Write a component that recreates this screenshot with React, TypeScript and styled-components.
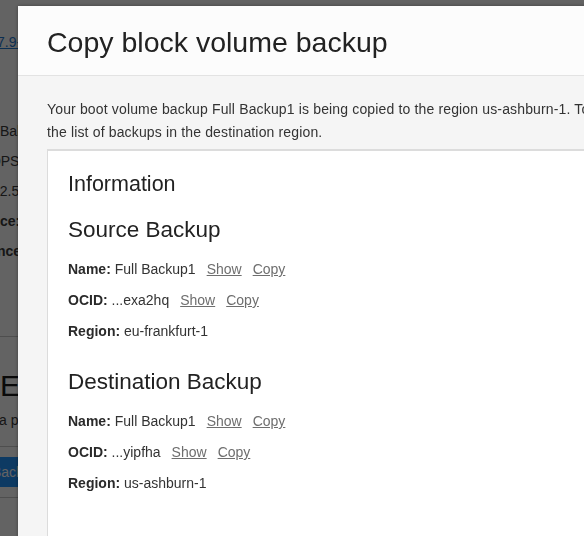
import styled, { createGlobalStyle } from "styled-components";

const GlobalStyle = createGlobalStyle`
  html, body {
    margin: 0;
    padding: 0;
    height: 100%;
    overflow: hidden;
    background: #ffffff;
    font-family: "Liberation Sans", Helvetica, Arial, sans-serif;
  }
`;

// page behind the dialog, only a thin strip of it shows
const BgPage = styled.div`
  display: flex;
  flex-direction: column;
  padding-top: 27px;
  width: 320px;
  color: #3a3a3a;
  font-size: 14px;
`;

const BgLine = styled.div<{ $indent?: number; $top?: number; $bold?: boolean }>`
  line-height: 30px;
  white-space: nowrap;
  margin-left: ${(p) => p.$indent ?? 0}px;
  margin-top: ${(p) => p.$top ?? 0}px;
  font-weight: ${(p) => (p.$bold ? 700 : 400)};
`;

const BgLink = styled.a`
  color: #1f78d1;
  text-decoration: underline;
`;

const BgRule = styled.hr<{ $top: number }>`
  border: 0;
  border-top: 1px solid #c8c8c8;
  margin: ${(p) => p.$top}px 0 0;
`;

const BgHeading = styled.div`
  font-size: 30px;
  line-height: 36px;
  margin-top: 31px;
  color: #1a1a1a;
`;

const BgButton = styled.div`
  margin-top: 10px;
  height: 30px;
  line-height: 30px;
  width: 120px;
  margin-left: -22px;
  padding-left: 14px;
  background: #2396ff;
  color: #ffffff;
  font-size: 14px;
`;

const Overlay = styled.div`
  position: fixed;
  inset: 0;
  background: rgba(0, 0, 0, 0.61);
`;

const Modal = styled.div`
  position: fixed;
  top: 6px;
  left: 18px;
  width: 680px;
  height: 560px;
  display: flex;
  flex-direction: column;
  background: #f5f5f5;
  box-shadow: 0 0 4px rgba(0, 0, 0, 0.35);
`;

const ModalHeader = styled.div`
  padding: 19px 29px 16px;
  background: #fcfcfc;
  border-bottom: 1px solid #e3e3e3;
`;

const ModalTitle = styled.h1`
  margin: 0;
  font-size: 28.5px;
  line-height: 34px;
  font-weight: 400;
  color: #222222;
`;

const ModalBody = styled.div`
  flex: 1;
  padding: 22px 29px 0;
`;

const Description = styled.p`
  margin: 0 0 5px;
  font-size: 14px;
  line-height: 23px;
  letter-spacing: 0.15px;
  color: #333333;
  white-space: nowrap;
`;

const Card = styled.div`
  background: #ffffff;
  border-top: 2px solid #dcdcdc;
  border-left: 1px solid #dcdcdc;
  padding: 20px 20px 40px;
  height: 100%;
`;

const CardTitle = styled.h2`
  margin: 0 0 19px;
  font-size: 21.5px;
  line-height: 26px;
  font-weight: 400;
  color: #222222;
`;

const Section = styled.section`
  display: flex;
  flex-direction: column;
  gap: 11px;
  & + & {
    margin-top: 27px;
  }
`;

const SectionTitle = styled.h3`
  margin: 0 0 5px;
  font-size: 22.5px;
  line-height: 27px;
  font-weight: 400;
  color: #222222;
`;

const Row = styled.div`
  font-size: 14px;
  line-height: 20px;
  color: #333333;
  white-space: nowrap;
`;

const Label = styled.b`
  font-weight: 700;
  color: #2a2a2a;
`;

const Action = styled.a`
  margin-left: 11px;
  color: #6e6e6e;
  text-decoration: underline;
  cursor: pointer;
`;

type Backup = { title: string; name: string; ocid: string; region: string };

const backups: Backup[] = [
  { title: "Source Backup", name: "Full Backup1", ocid: "...exa2hq", region: "eu-frankfurt-1" },
  { title: "Destination Backup", name: "Full Backup1", ocid: "...yipfha", region: "us-ashburn-1" },
];

function BackupSection({ b }: { b: Backup }) {
  return (
    <Section>
      <SectionTitle>{b.title}</SectionTitle>
      <Row>
        <Label>Name:</Label> {b.name}
        <Action>Show</Action>
        <Action>Copy</Action>
      </Row>
      <Row>
        <Label>OCID:</Label> {b.ocid}
        <Action>Show</Action>
        <Action>Copy</Action>
      </Row>
      <Row>
        <Label>Region:</Label> {b.region}
      </Row>
    </Section>
  );
}

export default function App() {
  return (
    <>
      <GlobalStyle />
      <BgPage>
        <BgLine $indent={-3}>
          <BgLink>7.9-1</BgLink>
        </BgLine>
        <BgLine $top={59}>Balanced</BgLine>
        <BgLine $indent={-14}>IOPS</BgLine>
        <BgLine $indent={-8}>12.5</BgLine>
        <BgLine $bold>ce:</BgLine>
        <BgLine $bold $indent={-3}>nce</BgLine>
        <BgRule $top={70} />
        <BgHeading>E</BgHeading>
        <BgLine $indent={-1} $top={1}>a p</BgLine>
        <BgRule $top={11} />
        <BgButton>Back</BgButton>
        <BgRule $top={10} />
      </BgPage>
      <Overlay />
      <Modal>
        <ModalHeader>
          <ModalTitle>Copy block volume backup</ModalTitle>
        </ModalHeader>
        <ModalBody>
          <Description>
            Your boot volume backup Full Backup1 is being copied to the region us-ashburn-1. To view it, go to
            <br />
            the list of backups in the destination region.
          </Description>
          <Card>
            <CardTitle>Information</CardTitle>
            {backups.map((b) => (
              <BackupSection key={b.title} b={b} />
            ))}
          </Card>
        </ModalBody>
      </Modal>
    </>
  );
}
